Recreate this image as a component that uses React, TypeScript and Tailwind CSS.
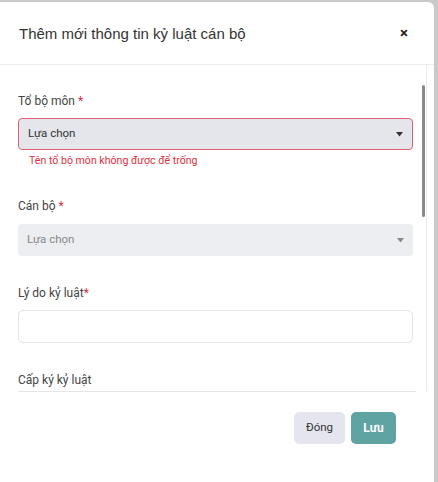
import React from "react";

function Caret({ color }: { color: string }) {
  return (
    <svg width="7" height="5" viewBox="0 0 7 5" className="shrink-0">
      <path d="M0 0 L7 0 L3.5 4.5 Z" fill={color} />
    </svg>
  );
}

export default function App() {
  return (
    <div
      className="w-[438px] h-[482px] bg-[#c9c9c9] pt-[2px] pr-[4px] overflow-hidden"
      style={{ fontFamily: "Roboto, 'Noto Sans', sans-serif" }}
    >
      <div className="relative w-[434px] h-[480px] bg-white rounded-tr-[6px] flex flex-col">
        {/* header */}
        <div className="h-[63px] shrink-0 border-b border-[#ececec] flex items-center justify-between pl-[19px] pr-[26px]">
          <div
            className="text-[15px] text-[#333] leading-5 pt-[1px]"
            style={{ fontFamily: "'Liberation Sans', Arial, sans-serif" }}
          >
            Thêm mới thông tin kỷ luật cán bộ
          </div>
          <div className="text-[15px] font-bold text-[#222] leading-none pt-[1px]">×</div>
        </div>

        {/* body */}
        <div className="h-[326px] shrink-0 overflow-hidden pl-[18px] pr-[21px] pt-[26px]">
          <div className="text-[12px] leading-5 text-[#444] mb-[7px]">
            Tổ bộ môn <span className="text-[#e0303c]">*</span>
          </div>
          <div className="h-[32px] rounded-[4px] border border-[#e06070] bg-[#e4e6eb] flex items-center justify-between pl-[9px] pr-[9px]">
            <span className="text-[11.5px] text-[#333]">Lựa chọn</span>
            <Caret color="#333" />
          </div>
          <div className="mt-[3px] pl-[11px] text-[10.6px] leading-4 text-[#e0303c] mb-[27px]">
            Tên tổ bộ môn không được để trống
          </div>

          <div className="text-[12px] leading-5 text-[#444] mb-[8px]">
            Cán bộ <span className="text-[#e0303c]">*</span>
          </div>
          <div className="h-[32px] rounded-[4px] bg-[#eceef1] flex items-center justify-between pl-[9px] pr-[9px] mb-[27px]">
            <span className="text-[11.5px] text-[#888]">Lựa chọn</span>
            <Caret color="#888" />
          </div>

          <div className="text-[12px] leading-5 text-[#444] mb-[7px]">
            Lý do kỷ luật<span className="text-[#e0303c]">*</span>
          </div>
          <div className="h-[33px] rounded-[5px] border border-[#e3e3e3] bg-white mb-[27px]" />

          <div className="text-[12px] leading-5 text-[#444]">Cấp ký kỷ luật</div>
        </div>

        {/* footer */}
        <div className="flex-1 px-[18px]">
          <div className="border-t border-[#e6e6e6] w-[398px] pt-[20px] flex justify-end gap-[6px] pr-[20px]">
            <button className="h-[32px] w-[51px] rounded-[5px] bg-[#e4e5ee] text-[11.5px] text-[#333]">
              Đóng
            </button>
            <button className="h-[32px] w-[45px] rounded-[5px] bg-[#5fa3a3] text-[12px] font-bold text-white">
              Lưu
            </button>
          </div>
        </div>

        {/* scrollbar */}
        <div className="absolute left-[426px] top-[63px] w-[1px] h-[326px] bg-[#ececec]" />
        <div className="absolute left-[422px] top-[83px] w-[3px] h-[132px] rounded-full bg-[#8a8a8a]" />
      </div>
    </div>
  );
}
